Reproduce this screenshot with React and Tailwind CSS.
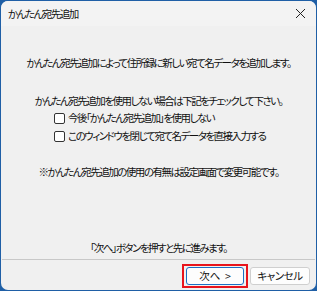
import React from "react";

const CheckRow = ({ label }) => (
  <div className="flex items-center h-[16px] pl-[53px]">
    <span className="w-[11px] h-[11px] border border-[#333] rounded-[2px] bg-white shrink-0" />
    <span className="ml-[3px] whitespace-nowrap">{label}</span>
  </div>
);

export default function App() {
  return (
    <div className="w-[317px] h-[291px] bg-[#1f5fa6] p-px text-[10.5px] leading-[16px] tracking-[-1.5px] text-[#111] font-['Noto_Sans_CJK_JP','Noto_Sans',sans-serif] [font-feature-settings:'palt'_1]">
      <div className="w-full h-full rounded-[7px] bg-[#f0f0f0] flex flex-col overflow-hidden">
        {/* title bar */}
        <div className="h-[25px] shrink-0 bg-[#f3f3f3] flex items-center justify-between pl-[7px] pr-[8px]">
          <span className="whitespace-nowrap">かんたん宛先追加</span>
          <svg width="11" height="11" viewBox="0 0 11 11" className="mr-[2px]">
            <path d="M1 1 L10 10 M10 1 L1 10" stroke="#222" strokeWidth="1" />
          </svg>
        </div>

        {/* body */}
        <div className="flex flex-col">
          <p className="mt-[29px] text-center whitespace-nowrap">
            かんたん宛先追加によって住所録に新しい宛て名データを追加します。
          </p>
          <p className="mt-[22px] text-center whitespace-nowrap">
            かんたん宛先追加を使用しない場合は下記をチェックして下さい。
          </p>
          <div className="mt-[1px]">
            <CheckRow label="今後「かんたん宛先追加」を使用しない" />
          </div>
          <div className="mt-[2px]">
            <CheckRow label="このウィンドウを閉じて宛て名データを直接入力する" />
          </div>
          <p className="mt-[20px] text-center whitespace-nowrap">
            ※かんたん宛先追加の使用の有無は設定画面で変更可能です。
          </p>
          <p className="mt-[60px] text-center whitespace-nowrap">
            「次へ」ボタンを押すと先に進みます。
          </p>
        </div>

        <div className="mt-[3px] h-px shrink-0 bg-[#c8c8c8] mx-px" />

        {/* buttons */}
        <div className="flex items-center justify-end pr-[6px] pt-[4px] gap-[2px] tracking-normal">
          <div className="border-[2px] border-[#e8141c] px-[2px] py-[1px]">
            <button className="w-[58px] h-[18px] rounded-[3px] border border-[#1a6fc4] bg-[#fdfdfd] leading-none flex items-center justify-center whitespace-nowrap">
              次へ&nbsp;&nbsp;&gt;
            </button>
          </div>
          <button className="w-[60px] h-[18px] rounded-[3px] border border-[#cfcfcf] bg-[#fdfdfd] leading-none flex items-center justify-center whitespace-nowrap tracking-[-0.5px]">
            キャンセル
          </button>
        </div>
      </div>
    </div>
  );
}
